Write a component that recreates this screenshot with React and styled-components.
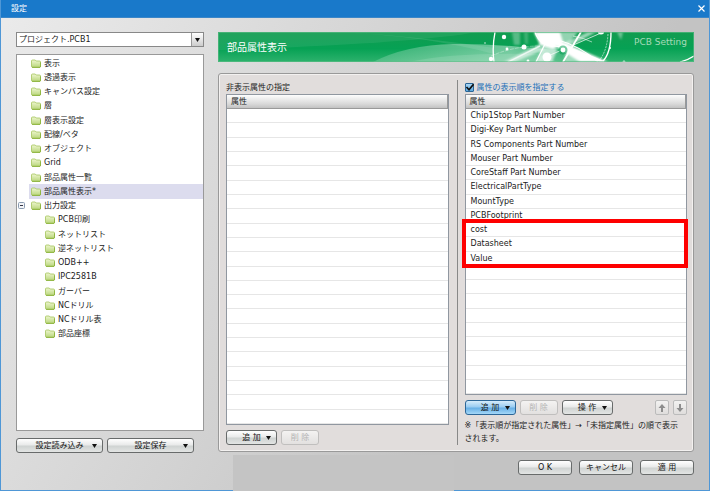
import React, { useState } from "react"
import styled, { createGlobalStyle, css } from "styled-components"

const GlobalStyle = createGlobalStyle`
    *, *::before, *::after {
        box-sizing: border-box;
    }

    body {
        margin: 0;
        font-family: "DejaVu Sans", "Noto Sans CJK JP", sans-serif;
        font-size: 8px;
        line-height: 13px;
        color: #222;
    }

    button, select, input {
        font: inherit;
        color: inherit;
        margin: 0;
    }
`;

const Window = styled.div`
    position: relative;
    min-height: 100vh;
    display: flex;
    flex-direction: column;
    border: 1px solid #4f97d6;
    border-top: none;
    background: linear-gradient(120deg, #ebebeb 0%, #d2d2d2 45%, #c3c3c3 70%);
`;

const TitleBar = styled.header`
    height: 18px;
    padding: 0 4px 0 10px;
    display: flex;
    align-items: center;
    justify-content: space-between;
    background-color: #1979ca;
    border-bottom: 1px solid #3a86c8;
    color: white;
`;

const CloseButton = styled.button`
    display: flex;
    padding: 0;
    border: none;
    background: none;
`;

const Content = styled.div`
    flex: 1;
    display: flex;
    gap: 14px;
    padding: 14px 15px 15px;
`;

const Side = styled.aside`
    width: 188px;
    display: flex;
    flex-direction: column;
    gap: 7px;
    padding-bottom: 22px;
`;

const SelectBox = styled.div`
    position: relative;
    display: flex;
    border: 1px solid #888;
    background-color: white;
`;

const Select = styled.select`
    flex: 1;
    height: 13px;
    padding: 0 16px 0 2px;
    border: none;
    appearance: none;
    background: none;
    font-size: 8px;
`;

const SelectArrow = styled.span`
    position: absolute;
    top: 0;
    right: 0;
    bottom: 0;
    width: 12px;
    display: flex;
    align-items: center;
    justify-content: center;
    border-left: 1px solid #999;
    background: linear-gradient(#fff, #ccc);
    pointer-events: none;
`;

const TreeBox = styled.nav`
    flex: 1;
    padding-top: 1px;
    border: 1px solid #999;
    background-color: white;
`;

const Tree = styled.ul`
    height: 285px;
    margin: 0;
    padding: 0;
    list-style: none;
    display: grid;
    grid-auto-rows: 1fr;
`;

const TreeItem = styled.li`
    display: grid;
    grid-template-columns: 12px 1fr;
    align-items: stretch;
`;

const Expander = styled.button`
    grid-column: 1;
    display: flex;
    align-items: center;
    padding: 0 0 0 1px;
    border: none;
    background: none;
`;

const TreeLink = styled.a`
    grid-column: 2;
    display: flex;
    align-items: center;
    gap: 3px;
    padding-left: ${props => props.$child ? "16px" : "2px"};
    background-color: ${props => props.$selected ? "#dcdcee" : "transparent"};
    color: #222;
    text-decoration: none;
    white-space: nowrap;
`;

const ButtonRow = styled.div`
    display: flex;
    gap: 4px;
`;

const Spacer = styled.span`
    flex: 1;
`;

const Button = styled.button`
    width: ${props => props.$width}px;
    height: 15px;
    padding: 0 5px;
    display: grid;
    grid-template-columns: 1fr auto 1fr;
    align-items: center;
    border: 1px solid #686b6b;
    border-radius: 3px;
    background: linear-gradient(#fff 0%, #e9eaea 45%, #cfd3d2 55%, #e3e5e4 100%);
    line-height: 12px;
    white-space: nowrap;
    color: #111;

    span {
        grid-column: 2;
    }

    svg {
        justify-self: end;
    }

    ${props => props.$primary && css`
        border-color: #2d6798;
        background: linear-gradient(#d6ecfb 0%, #9bcdf2 45%, #68b0e6 55%, #a4d8f8 100%);
    `}

    &:disabled {
        border-color: #c0bfbe;
        background: linear-gradient(#f4f3f2, #e2e0df);
        color: #b4b4b4;
    }
`;

const MoveButton = styled.button`
    width: 14px;
    height: 15px;
    padding: 0;
    display: flex;
    align-items: center;
    justify-content: center;
    border: 1px solid #bbb;
    border-radius: 2px;
    background: linear-gradient(#f3f2f1, #dfdddc);
`;

const Main = styled.main`
    flex: 1;
    min-width: 0;
    display: flex;
    flex-direction: column;
`;

const Banner = styled.div`
    height: 30px;
    display: grid;
    margin-bottom: 11px;

    > * {
        grid-area: 1 / 1;
    }
`;

const BannerText = styled.div`
    z-index: 1;
    display: flex;
    justify-content: space-between;
    padding: 0 7px 0 9px;
`;

const BannerTitle = styled.h1`
    margin: 0;
    align-self: center;
    font-size: 10px;
    font-weight: 400;
    color: white;
`;

const BannerNote = styled.span`
    padding-top: 4px;
    font-size: 9px;
    color: #a5dbb9;
`;

const Panel = styled.section`
    flex: 1;
    display: flex;
    padding: 6px;
    border: 1px solid #999;
    border-radius: 3px;
    box-shadow: inset 0 0 0 1px #f3f1f0;
    background-color: #e1dddc;
`;

const Column = styled.div`
    flex: 1;
    min-width: 0;
    display: flex;
    flex-direction: column;
    padding: 0 ${props => props.$last ? 0 : 8}px 0 ${props => props.$last ? 7 : 1}px;
    border-left: ${props => props.$last ? "1px solid #888" : "none"};
`;

const ColumnLabel = styled.div`
    height: 14px;
    display: flex;
    align-items: center;
`;

const CheckLabel = styled.label`
    height: 14px;
    display: flex;
    align-items: center;
    gap: 3px;
    color: #1c70b8;
`;

const Checkbox = styled.input`
    appearance: none;
    width: 9px;
    height: 9px;
    border: 1px solid #2b6697;
    border-radius: 1px;
    background: linear-gradient(#a8d6f5, #5ba8e0);
`;

const CheckCell = styled.span`
    display: grid;

    > * {
        grid-area: 1 / 1;
    }

    svg {
        pointer-events: none;
    }
`;

const Table = styled.table`
    flex: 1;
    display: grid;
    grid-template-rows: 14px 1fr;
    margin-bottom: 5px;
    border: 1px solid #9097a0;
    background-color: white;
`;

const Head = styled.thead`
    display: grid;
    background: linear-gradient(#fdfdfd, #d8d8d8 70%, #c2c2c2);
    border-bottom: 1px solid #999;
    border-right: 1px solid #999;

    tr {
        display: grid;
    }

    th {
        padding: 0 4px;
        text-align: left;
        font-weight: 400;
        line-height: 13px;
    }
`;

const Rows = styled.tbody`
    display: grid;
    grid-auto-rows: 1fr;
`;

const Row = styled.tr`
    display: grid;
    border-bottom: 1px solid #e6e6e6;
`;

const Cell = styled.td`
    padding: 0 5px;
    line-height: 13px;
    white-space: nowrap;
`;

const TableArea = styled.div`
    flex: 1;
    display: flex;
    position: relative;
`;

// red frame drawn over the last three attributes
const Marker = styled.div`
    position: absolute;
    top: 125px;
    left: -3px;
    right: -1px;
    height: 49px;
    border: 4px solid #fe0000;
`;

const Note = styled.p`
    margin: 4px 0 0;
    padding-right: 6px;
`;

const Footer = styled.footer`
    display: flex;
    justify-content: flex-end;
    gap: 7px;
    margin-top: 8px;
`;

const Patch = styled.div`
    position: absolute;
    left: 232px;
    top: 455px;
    width: 221px;
    bottom: -1px;
    background-color: #c4c4c4;
`;

const Caret = () => (
    <svg width="5" height="4" viewBox="0 0 5 4" aria-hidden="true">
        <path d="M0 0H5L2.5 4Z" fill="#111" />
    </svg>
)

const Folder = () => (
    <svg width="10" height="9" viewBox="0 0 10 9" aria-hidden="true">
        <defs>
            <linearGradient id="folder" x2="0" y2="1">
                <stop offset="0" stopColor="#eef6cf" />
                <stop offset="1" stopColor="#b9d67c" />
            </linearGradient>
        </defs>
        <path
            d="M.5 7.2V2Q.5 1 1.5 1H4.2L5.2 2H8.5Q9.5 2 9.5 3V7.2Q9.5 8.3 8.5 8.3H1.5Q.5 8.3 .5 7.2Z"
            fill="url(#folder)"
            stroke="#a3c45c"
            strokeWidth=".8"
        />
        <path d="M1 8.4H9Q9.6 8.2 9.6 7V3.4" fill="none" stroke="#84ad2f" strokeWidth=".8" />
    </svg>
)

const Arrow = ({ down }) => (
    <svg width="8" height="8" viewBox="0 0 8 8" aria-hidden="true">
        <path
            d={down ? "M3 0H5V4H7.5L4 8L.5 4H3Z" : "M3 8H5V4H7.5L4 0L.5 4H3Z"}
            fill="#8d8d8d"
        />
    </svg>
)

const BannerArt = () => (
    <svg width="100%" height="30" viewBox="0 0 476 30" preserveAspectRatio="xMaxYMid slice" aria-hidden="true">
        <defs>
            <linearGradient id="green" x2="0" y2="1">
                <stop offset="0" stopColor="#129c50" />
                <stop offset=".55" stopColor="#06a154" />
                <stop offset="1" stopColor="#2db26d" />
            </linearGradient>
            <linearGradient id="wave" x2="1">
                <stop offset="0" stopColor="#fff" stopOpacity=".18" />
                <stop offset=".6" stopColor="#fff" stopOpacity=".42" />
                <stop offset="1" stopColor="#fff" stopOpacity="0" />
            </linearGradient>
            <filter id="soft" x="-20%" y="-20%" width="140%" height="140%">
                <feGaussianBlur stdDeviation="1.3" />
            </filter>
        </defs>
        <rect width="476" height="30" fill="url(#green)" />
        <path d="M0 0H260Q190 12 0 18Z" fill="#fff" opacity=".07" />
        <path d="M120 0Q200 4 276 16V22Q210 4 120 0Z" fill="#fff" opacity=".1" />
        <path d="M155 30Q188 13 235 12T370 22L385 30Z" fill="url(#wave)" />
        <path d="M190 30Q235 20 320 22L340 30Z" fill="#fff" opacity=".12" />
        <g filter="url(#soft)" fill="#fff">
            <path d="M294 0H302V13H296Z" opacity=".3" />
            <path d="M306 0H310V12H307Z" opacity=".2" />
            <path d="M316 0H342L345 10L335 17L322 13Z" />
            <path d="M342 0H360L350 12L340 14Z" opacity=".55" />
            <path d="M318 30L326 12L340 16L334 30Z" opacity=".65" />
            <path d="M336 6L390 30H362L340 16Z" />
            <path d="M286 30L322 12L326 18L296 30Z" opacity=".6" />
            <path d="M378 0L345 18L340 14L370 0Z" opacity=".6" />
            <path d="M348 18L372 30H346Z" opacity=".5" />
        </g>
        <path d="M399 0H405L403 8Z" fill="#fff" opacity=".4" filter="url(#soft)" />
        <g fill="none" stroke="#fff">
            <path d="M277 0Q274 15 276 30" strokeWidth="1.3" />
            <path d="M273 24Q296 14 322 14" strokeWidth=".6" opacity=".6" strokeDasharray="4 1" />
            <path d="M290 30L322 14" strokeWidth="1.4" opacity=".7" />
            <path d="M317 0Q322 14 336 14T386 30" strokeWidth="1.4" />
            <path d="M330 8L384 30" strokeWidth="1.6" />
            <path d="M340 8Q362 14 380 30" strokeWidth="1.2" />
            <path d="M363 0L345 30" strokeWidth="1.8" />
            <path d="M383 1L330 24" strokeWidth="1" opacity=".7" />
            <path d="M328 10L318 30" strokeWidth="1.2" />
            <path d="M355 4Q366 6 374 10" strokeWidth=".8" opacity=".7" />
            <path d="M393 0Q393 22 384 30" strokeWidth="1.4" />
            <path d="M390 2Q389 20 380 30" strokeWidth=".6" strokeDasharray="2 1" />
            <path d="M462 30Q470 28 476 24" strokeWidth="1.2" />
        </g>
        <circle cx="345" cy="18" r="4.5" fill="#06a154" opacity=".55" />
        <g fill="#fff">
            <circle cx="286" cy="5" r="2.2" />
            <circle cx="267" cy="11" r=".7" />
            <circle cx="289" cy="17" r="1.4" />
            <circle cx="306" cy="15" r="2.5" />
            <circle cx="273" cy="27" r="2.2" />
            <circle cx="310" cy="29" r="1.4" />
            <circle cx="329" cy="25" r="4.5" />
            <circle cx="345" cy="18" r="2.4" />
            <ellipse cx="383" cy="0" rx="3" ry="2.5" />
            <circle cx="392" cy="16" r="1" />
            <circle cx="406" cy="30" r="1.5" />
        </g>
        <rect x=".5" y=".5" width="475" height="29" fill="none" stroke="#5fbd87" opacity=".6" />
    </svg>
)

const treeItems = [
    { label: "表示" },
    { label: "透過表示" },
    { label: "キャンバス設定" },
    { label: "層" },
    { label: "層表示設定" },
    { label: "配線/ベタ" },
    { label: "オブジェクト" },
    { label: "Grid" },
    { label: "部品属性一覧" },
    { label: "部品属性表示*", selected: true },
    { label: "出力設定", parent: true },
    { label: "PCB印刷", child: true },
    { label: "ネットリスト", child: true },
    { label: "逆ネットリスト", child: true },
    { label: "ODB++", child: true },
    { label: "IPC2581B", child: true },
    { label: "ガーバー", child: true },
    { label: "NCドリル", child: true },
    { label: "NCドリル表", child: true },
    { label: "部品座標", child: true },
]

const attributes = [
    "Chip1Stop Part Number",
    "Digi-Key Part Number",
    "RS Components Part Number",
    "Mouser Part Number",
    "CoreStaff Part Number",
    "ElectricalPartType",
    "MountType",
    "PCBFootprint",
    "cost",
    "Datasheet",
    "Value",
]

const AttributeTable = ({ label, items, rows }) => (
    <Table aria-label={label}>
        <Head>
            <tr><th scope="col">属性</th></tr>
        </Head>
        <Rows>
            {Array.from({ length: rows }, (_, i) => (
                <Row key={i}><Cell>{items[i]}</Cell></Row>
            ))}
        </Rows>
    </Table>
)

const MenuButton = ({ children, ...rest }) => (
    <Button type="button" {...rest}>
        <span>{children}</span>
        <Caret />
    </Button>
)

export default () => {
    const [ordered, setOrdered] = useState(true)

    return (
        <>
            <GlobalStyle />
            <Window>
                <TitleBar>
                    <span>設定</span>
                    <CloseButton type="button" aria-label="閉じる">
                        <svg width="7" height="7" viewBox="0 0 7 7">
                            <path d="M.5 .5L6.5 6.5M6.5 .5L.5 6.5" stroke="#fff" strokeWidth="1.2" />
                        </svg>
                    </CloseButton>
                </TitleBar>
                <Content>
                    <Side>
                        <SelectBox>
                            <Select aria-label="プロジェクト">
                                <option>プロジェクト.PCB1</option>
                            </Select>
                            <SelectArrow><Caret /></SelectArrow>
                        </SelectBox>
                        <TreeBox>
                            <Tree>
                                {treeItems.map(item => (
                                    <TreeItem key={item.label}>
                                        {item.parent && (
                                            <Expander type="button" aria-label="折りたたむ">
                                                <svg width="7" height="7" viewBox="0 0 7 7">
                                                    <rect x=".5" y=".5" width="6" height="6" rx="1" fill="#f3f5f8" stroke="#8a9bb0" />
                                                    <path d="M2 3.5H5" stroke="#334" />
                                                </svg>
                                            </Expander>
                                        )}
                                        <TreeLink href="#" $child={item.child} $selected={item.selected}>
                                            <Folder />
                                            {item.label}
                                        </TreeLink>
                                    </TreeItem>
                                ))}
                            </Tree>
                        </TreeBox>
                        <ButtonRow>
                            <MenuButton $width={87}>設定読み込み</MenuButton>
                            <MenuButton $width={87}>設定保存</MenuButton>
                        </ButtonRow>
                    </Side>
                    <Main>
                        <Banner>
                            <BannerArt />
                            <BannerText>
                                <BannerTitle>部品属性表示</BannerTitle>
                                <BannerNote>PCB Setting</BannerNote>
                            </BannerText>
                        </Banner>
                        <Panel>
                            <Column>
                                <ColumnLabel>非表示属性の指定</ColumnLabel>
                                <AttributeTable label="非表示属性" items={[]} rows={22} />
                                <ButtonRow>
                                    <MenuButton $width={51}>追 加</MenuButton>
                                    <Button type="button" $width={38} disabled><span>削 除</span></Button>
                                </ButtonRow>
                            </Column>
                            <Column $last>
                                <CheckLabel>
                                    <CheckCell>
                                        <Checkbox
                                            type="checkbox"
                                            checked={ordered}
                                            onChange={e => setOrdered(e.target.checked)}
                                        />
                                        {ordered && (
                                            <svg width="9" height="9" viewBox="0 0 9 9" aria-hidden="true">
                                                <path d="M1.5 4L4 6.8L8.5 1.2" fill="none" stroke="#111" strokeWidth="1.7" />
                                            </svg>
                                        )}
                                    </CheckCell>
                                    属性の表示順を指定する
                                </CheckLabel>
                                <TableArea>
                                    <AttributeTable label="表示順" items={attributes} rows={20} />
                                    <Marker />
                                </TableArea>
                                <ButtonRow>
                                    <MenuButton $width={51} $primary>追 加</MenuButton>
                                    <Button type="button" $width={38} disabled><span>削 除</span></Button>
                                    <MenuButton $width={51}>操 作</MenuButton>
                                    <Spacer />
                                    <MoveButton type="button" aria-label="上へ"><Arrow /></MoveButton>
                                    <MoveButton type="button" aria-label="下へ"><Arrow down /></MoveButton>
                                </ButtonRow>
                                <Note>※「表示順が指定された属性」→「未指定属性」の順で表示されます。</Note>
                            </Column>
                        </Panel>
                        <Footer>
                            <Button type="button" $width={54}><span>O K</span></Button>
                            <Button type="button" $width={54}><span>キャンセル</span></Button>
                            <Button type="button" $width={54}><span>適 用</span></Button>
                        </Footer>
                    </Main>
                </Content>
                <Patch />
            </Window>
        </>
    )
}
